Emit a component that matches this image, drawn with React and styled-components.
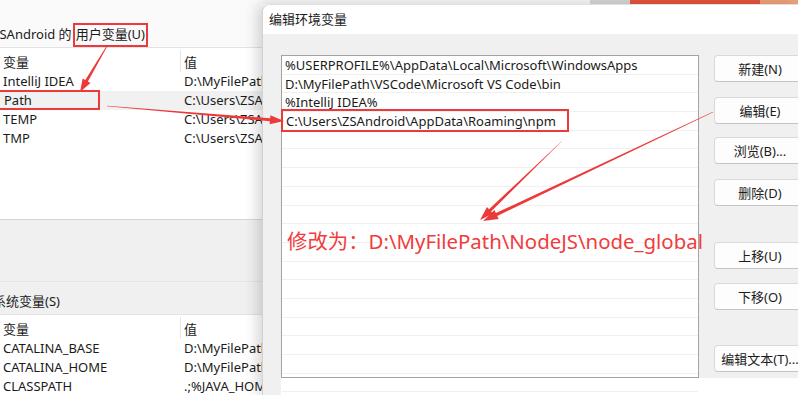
import React from 'react'
import styled, { createGlobalStyle } from 'styled-components'

const GlobalStyle = createGlobalStyle`
  html, body { margin: 0; padding: 0; background: #fff; }
  body { font-family: "Noto Sans", "Noto Sans CJK SC", sans-serif; }
`

const RED = '#ec3a3a'

const Page = styled.div`
  width: 798px;
  height: 395px;
  overflow: hidden;
  position: relative;
  display: flex;
  color: #1b1b1b;
  font-size: 13px;
`

// ---- window behind (user / system variables)
const LeftWindow = styled.div`
  width: 262px;
  flex-shrink: 0;
  background: #fafafa;
  display: flex;
  flex-direction: column;
  overflow: hidden;
`

const UserHeader = styled.div`
  height: 52px;
  box-sizing: border-box;
  padding-top: 23px;
  display: flex;
  white-space: nowrap;
`

const HeaderText = styled.span`
  margin-left: -8px;
  line-height: 22px;
  display: flex;
`

const MarkBox = styled.span`
  border: 2px solid ${RED};
  padding: 0 1px;
  margin-left: 1px;
  line-height: 18px;
`

const VarTable = styled.div`
  background: #fff;
  border-top: 1px solid #e3e3e3;
  height: ${p => p.$h}px;
  flex-shrink: 0;
`

const HeadRow = styled.div`
  display: flex;
  height: 24px;
  box-sizing: border-box;
  padding-top: 2px;
  align-items: center;
`

const Row = styled.div`
  display: flex;
  height: 18.8px;
  align-items: center;
  white-space: nowrap;
  background: ${p => (p.$selected ? '#f1f1f1' : 'transparent')};
`

const NameCell = styled.div`
  width: 177px;
  padding-left: 3px;
  height: 100%;
  display: flex;
  align-items: center;
  flex-shrink: 0;
  border-right: ${p => (p.$head ? '1px solid #e6e6e6' : '1px solid transparent')};
`

const ValueCell = styled.div`
  padding-left: 3px;
`

const BoxedName = styled.span`
  display: flex;
  align-items: center;
  box-sizing: border-box;
  width: 102px;
  height: 20px;
  margin-left: -5px;
  padding-left: 4px;
  border: 2px solid ${RED};
`

const GrayGap = styled.div`
  background: #f0f0f0;
  border-top: 1px solid #d6d6d6;
  padding-top: 61px;
  flex-shrink: 0;
`

const SysLabel = styled.div`
  border-top: 1px solid #e4e4e4;
  height: 33px;
  display: flex;
  align-items: center;
  padding-top: 4px;
  box-sizing: border-box;
  margin-left: -7px;
  white-space: nowrap;
`

// ---- foreground dialog
const DialogColumn = styled.div`
  flex: 1;
  display: flex;
  flex-direction: column;
  min-width: 0;
`

const TopStrip = styled.div`
  height: 4px;
  flex-shrink: 0;
  display: flex;
  background: #f7f7f7;
`

const StripPart = styled.div`
  width: ${p => p.$w}px;
  background: ${p => p.$c};
  flex-shrink: 0;
`

const Dialog = styled.div`
  flex: 1;
  display: flex;
  flex-direction: column;
  border-radius: 8px 0 0 0;
  border-left: 1px solid #d2d2d2;
  border-top: 1px solid #e0e0e0;
  box-shadow: -5px 0 14px rgba(0, 0, 0, 0.16);
  overflow: hidden;
  background: #fff;
`

const TitleBar = styled.div`
  height: 29px;
  flex-shrink: 0;
  display: flex;
  align-items: center;
  padding-left: 6px;
  padding-bottom: 2px;
  box-sizing: border-box;
  background: #fff;
  font-size: 13px;
`

const DialogBody = styled.div`
  flex: 1;
  display: flex;
  align-items: flex-start;
  padding: 21px 0 0 18px;
  background:
    linear-gradient(#f0f0f0, #f0f0f0) top left / 100% 21px no-repeat,
    linear-gradient(#f0f0f0, #f0f0f0) top left / 18px 100% no-repeat,
    #fff;
`

const ListBox = styled.div`
  width: 418px;
  height: 323px;
  box-sizing: border-box;
  border: 1px solid #a3a3a3;
  background: #fff;
  flex-shrink: 0;
`

const ListItem = styled.div`
  height: 18.7px;
  box-sizing: border-box;
  border-bottom: 1px solid #f0f0f0;
  padding-left: 3px;
  display: flex;
  align-items: center;
  white-space: nowrap;
`

const BoxedItem = styled.span`
  display: flex;
  align-items: center;
  box-sizing: border-box;
  height: 23px;
  margin-left: -4px;
  padding: 0 11px 0 3px;
  border: 2px solid ${RED};
  flex-shrink: 0;
`

const SidePanel = styled.div`
  padding-left: 15px;
  width: 110px;
  height: 323px;
  background: #f0f0f0;
  display: flex;
  flex-direction: column;
  flex-shrink: 0;
`

const Button = styled.div`
  width: 92px;
  height: 27px;
  box-sizing: border-box;
  margin-top: ${p => p.$gap || 0}px;
  background: #fdfdfd;
  border: 1px solid #d9d9d9;
  border-bottom-color: #c4c4c4;
  border-radius: 4px;
  display: flex;
  align-items: center;
  justify-content: center;
  white-space: nowrap;
  font-size: 13px;
`

const Note = styled.div`
  position: absolute;
  left: 287px;
  top: 229px;
  font-size: 20.4px;
  line-height: 24px;
  color: #f03c3c;
  white-space: nowrap;
`

const Overlay = styled.svg`
  position: absolute;
  left: 0;
  top: 0;
  pointer-events: none;
`

function arrowPoints(x1, y1, x2, y2, w0, w1, headLen, headW) {
  const dx = x2 - x1
  const dy = y2 - y1
  const len = Math.hypot(dx, dy)
  const ux = dx / len
  const uy = dy / len
  const nx = -uy
  const ny = ux
  const bx = x2 - ux * headLen
  const by = y2 - uy * headLen
  const pts = [
    [x1 + (nx * w0) / 2, y1 + (ny * w0) / 2],
    [bx + (nx * w1) / 2, by + (ny * w1) / 2],
    [bx + (nx * headW) / 2, by + (ny * headW) / 2],
    [x2, y2],
    [bx - (nx * headW) / 2, by - (ny * headW) / 2],
    [bx - (nx * w1) / 2, by - (ny * w1) / 2],
    [x1 - (nx * w0) / 2, y1 - (ny * w0) / 2],
  ]
  return pts.map(p => p[0].toFixed(1) + ',' + p[1].toFixed(1)).join(' ')
}

const arrows = [
  [107, 46, 80, 92, 0.6, 3, 13, 9],
  [107, 106, 284, 121, 0.5, 3, 14, 9],
  [713, 112, 483, 221, 0.4, 3.2, 15, 10],
  [562, 141, 480, 220, 0.4, 3, 14, 9],
]

const userVars = [
  ['IntelliJ IDEA', 'D:\\MyFilePath\\IntelliJ'],
  ['Path', 'C:\\Users\\ZSAndroid', true],
  ['TEMP', 'C:\\Users\\ZSAndroid'],
  ['TMP', 'C:\\Users\\ZSAndroid'],
]

const sysVars = [
  ['CATALINA_BASE', 'D:\\MyFilePath\\Tomcat'],
  ['CATALINA_HOME', 'D:\\MyFilePath\\Tomcat'],
  ['CLASSPATH', '.;%JAVA_HOME%\\lib'],
]

const pathItems = [
  '%USERPROFILE%\\AppData\\Local\\Microsoft\\WindowsApps',
  'D:\\MyFilePath\\VSCode\\Microsoft VS Code\\bin',
  '%IntelliJ IDEA%',
  'C:\\Users\\ZSAndroid\\AppData\\Roaming\\npm',
]

const buttons = [
  ['新建(N)', 0],
  ['编辑(E)', 15],
  ['浏览(B)...', 13],
  ['删除(D)', 15],
  ['上移(U)', 36],
  ['下移(O)', 14],
  ['编辑文本(T)...', 35],
]

export default function App() {
  return (
    <>
      <GlobalStyle />
      <Page>
        <LeftWindow>
          <UserHeader>
            <HeaderText>
              ZSAndroid 的<MarkBox>用户变量(U)</MarkBox>
            </HeaderText>
          </UserHeader>
          <VarTable $h={171}>
            <HeadRow>
              <NameCell $head>变量</NameCell>
              <ValueCell>值</ValueCell>
            </HeadRow>
            {userVars.map(([name, value, marked]) => (
              <Row key={name} $selected={marked}>
                <NameCell>{marked ? <BoxedName>{name}</BoxedName> : name}</NameCell>
                <ValueCell>{value}</ValueCell>
              </Row>
            ))}
          </VarTable>
          <GrayGap>
            <SysLabel>系统变量(S)</SysLabel>
          </GrayGap>
          <VarTable $h={80}>
            <HeadRow>
              <NameCell $head>变量</NameCell>
              <ValueCell>值</ValueCell>
            </HeadRow>
            {sysVars.map(([name, value]) => (
              <Row key={name}>
                <NameCell>{name}</NameCell>
                <ValueCell>{value}</ValueCell>
              </Row>
            ))}
          </VarTable>
        </LeftWindow>

        <DialogColumn>
          <TopStrip>
            <StripPart $w={328} $c="#f7f7f7" />
            <StripPart $w={40} $c="#d6d6d6" />
            <StripPart $w={130} $c="#e4553a" />
            <StripPart $w={40} $c="#efa27a" />
          </TopStrip>
          <Dialog>
            <TitleBar>编辑环境变量</TitleBar>
            <DialogBody>
              <ListBox>
                {pathItems.map((item, i) => (
                  <ListItem key={item}>
                    {i === 3 ? <BoxedItem>{item}</BoxedItem> : item}
                  </ListItem>
                ))}
                {Array.from({ length: 14 }).map((_, i) => (
                  <ListItem key={'e' + i} />
                ))}
              </ListBox>
              <SidePanel>
                {buttons.map(([label, gap]) => (
                  <Button key={label} $gap={gap}>{label}</Button>
                ))}
              </SidePanel>
            </DialogBody>
          </Dialog>
        </DialogColumn>

        <Note>修改为：D:\MyFilePath\NodeJS\node_global</Note>

        <Overlay width="798" height="395" viewBox="0 0 798 395">
          {arrows.map((a, i) => (
            <polygon key={i} points={arrowPoints(...a)} fill={RED} />
          ))}
        </Overlay>
      </Page>
    </>
  )
}
